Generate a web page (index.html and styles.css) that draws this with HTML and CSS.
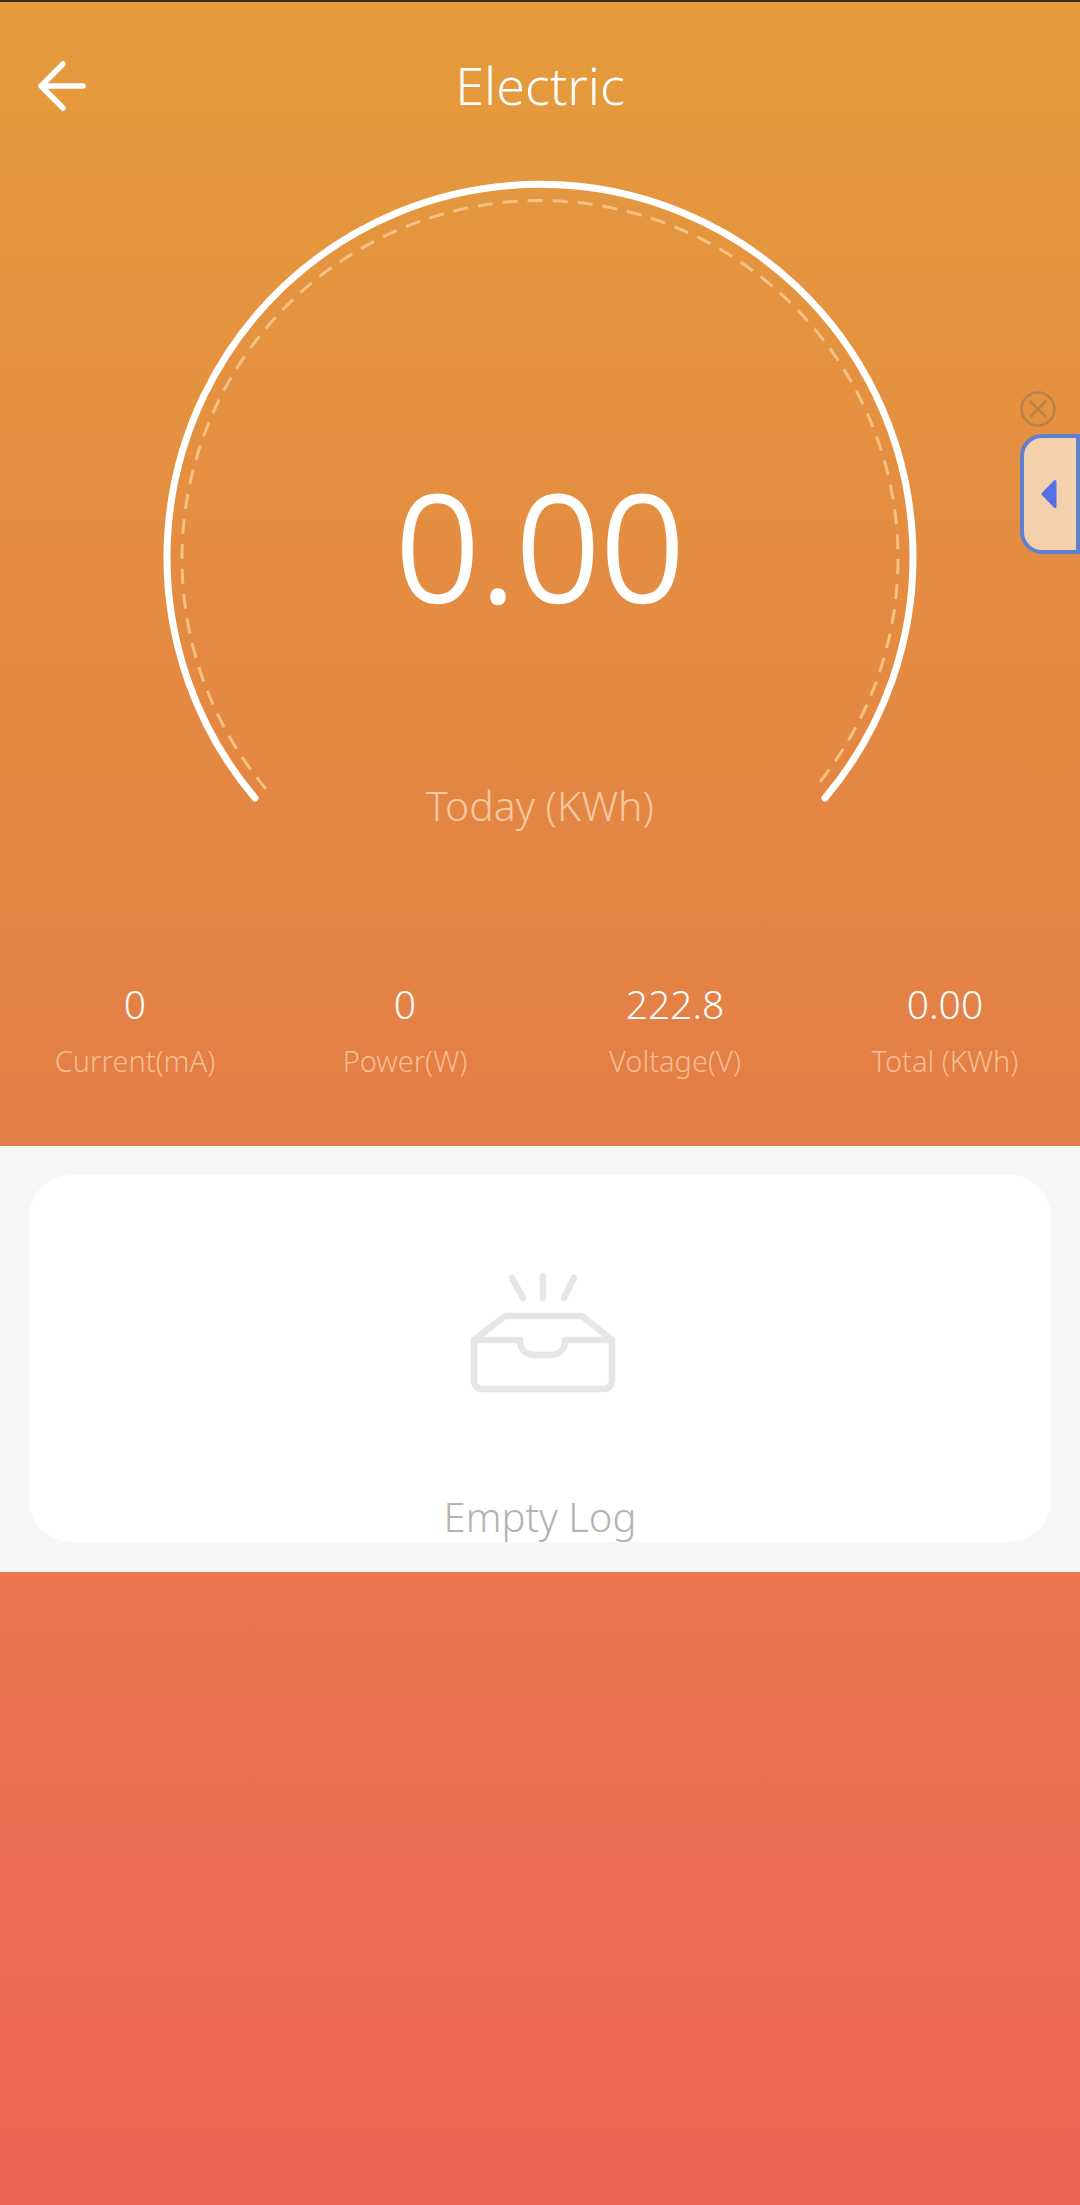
FILE: index.html
```html
<!DOCTYPE html>
<html lang="en">
<head>
  <meta charset="UTF-8">
  <title>Electric</title>
  <link rel="stylesheet" href="styles.css">
</head>
<body>

<div class="page">
  <div class="top">
    <header class="bar">
      <svg class="back" width="48" height="50" viewBox="0 0 48 50" fill="none" stroke="#fff" stroke-width="5.5" stroke-linecap="round" stroke-linejoin="round">
        <path d="M45 25H3M25 3L3 25l22 22"/>
      </svg>
      <h1>Electric</h1>
    </header>

    <!-- gauge -->
    <section class="gauge">
      <svg width="1080" height="700" viewBox="0 0 1080 700" fill="none" stroke-linecap="round">
        <path d="M255 678A373 373 0 1 1 825 678" stroke="#fff" stroke-width="7"/>
        <path d="M266 669A358 358 0 1 1 814 669" stroke="#f6c184" stroke-width="3" stroke-dasharray="15 10" stroke-linecap="butt"/>
      </svg>
      <div class="reading">0.00</div>
      <div class="reading-label">Today (KWh)</div>
    </section>

    <section class="stats">
      <div class="stat"><b>0</b><span>Current(mA)</span></div>
      <div class="stat"><b>0</b><span>Power(W)</span></div>
      <div class="stat"><b>222.8</b><span>Voltage(V)</span></div>
      <div class="stat"><b>0.00</b><span>Total (KWh)</span></div>
    </section>
  </div>

  <section class="log">
    <div class="card">
      <svg class="inbox" width="150" height="124" viewBox="0 0 150 124" fill="none" stroke="#e6e6e6" stroke-width="6.5" stroke-linecap="round" stroke-linejoin="round">
        <path d="M44 6l11 20M75 4v22M106 6L96 26"/>
        <path d="M6 68v41a8 8 0 0 0 8 8h122a8 8 0 0 0 8-8V68L114 44H37Z"/>
        <path d="M6 68h46v1c0 9 6 14 15 14h15c9 0 15-5 15-14v-1h47"/>
      </svg>
      <p>Empty Log</p>
    </div>
  </section>

  <div class="rest"></div>

  <!-- floating helper widget -->
  <aside class="float">
    <svg class="close" width="36" height="36" viewBox="0 0 36 36" fill="none" stroke="#b98048" stroke-width="2.5" stroke-linecap="round">
      <circle cx="18" cy="18" r="16.5"/>
      <path d="M10.5 10.5l15 15M25.5 10.5l-15 15"/>
    </svg>
    <div class="tab">
      <svg width="16" height="30" viewBox="0 0 16 30" fill="#5670e6" stroke="#5670e6" stroke-width="3" stroke-linejoin="round">
        <path d="M14 2.5V27.5L2 15Z"/>
      </svg>
    </div>
  </aside>
</div>

</body>
</html>
```
FILE: styles.css
```css
html, body { margin: 0; padding: 0; }

body {
  font-family: "Noto Sans", "Open Sans", sans-serif;
  font-weight: 300;
  color: #fff;
}

.page {
  position: relative;
  width: 1080px;
  height: 2205px;
  overflow: hidden;
  border-top: 2px solid #3a2a18;
  box-sizing: border-box;
  background: linear-gradient(180deg, #e49c3c 0%, #e48a42 30%, #e47d47 52%, #e9754e 72%, #ed6558 100%);
}

.top { height: 1144px; display: flex; flex-direction: column; }

/* Header */
.bar { height: 118px; display: flex; justify-content: center; position: relative; }
.bar h1 { margin: 51px 0 0; font-size: 52px; line-height: 64px; font-weight: 300; }
.back { position: absolute; left: 38px; top: 59px; }

/* Gauge */
.gauge { position: relative; height: 752px; }
.gauge svg { display: block; }
.reading {
  position: absolute; left: 0; right: 0; top: 330px;
  text-align: center; font-size: 148px; line-height: 190px; font-weight: 300;
  -webkit-text-stroke: 2.5px #fff;
}
.reading-label {
  position: absolute; left: 0; right: 0; top: 660px;
  text-align: center; font-size: 41px; line-height: 50px; color: #f6c8a0;
}

/* Stats row */
.stats { display: grid; grid-template-columns: repeat(4, 270px); margin-top: 107px; }
.stat { display: flex; flex-direction: column; align-items: center; }
.stat b { font-size: 39px; line-height: 50px; font-weight: 300; }
.stat span { font-size: 29px; line-height: 40px; margin-top: 12px; color: #f7bd94; }

/* Log panel */
.log { height: 426px; background: #f7f7f7; padding: 29px; box-sizing: border-box; }
.card {
  height: 367px; background: #fff; border-radius: 42px;
  display: flex; flex-direction: column; align-items: center;
}
.inbox { margin-top: 97px; margin-left: 6px; flex-shrink: 0; }
.card p { margin: 96px 0 0; font-size: 40px; line-height: 50px; color: #b3b3b3; flex-shrink: 0; }

/* Floating widget */
.float { position: absolute; right: 0; top: 389px; width: 60px; display: flex; flex-direction: column; }
.tab {
  margin-top: 7px; height: 120px; background: #f4d1ac;
  border: 4px solid #5f7fd0; border-radius: 22px 0 0 22px;
  box-sizing: border-box; display: flex; align-items: center; justify-content: center;
}
.tab svg { margin-right: 2px; }
```
